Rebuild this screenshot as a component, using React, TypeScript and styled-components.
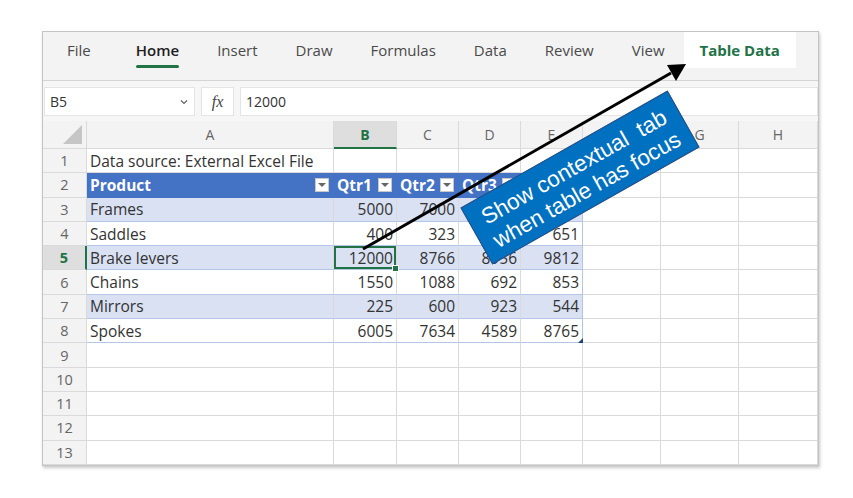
import styled, { createGlobalStyle, css } from 'styled-components';

const GREEN = '#217346';
const GRID = '#dadada';
const BAND = '#d9e1f2';
const TABLE_LINE = '#b4c6e7';
const COLS = '44px 247px 63px 62px 62px 62px 78px 78px 79px';

const GlobalStyle = createGlobalStyle`
  body {
    margin: 0;
    background: #fff;
    font-family: "Open Sans", "Noto Sans", sans-serif;
  }
`;

const Page = styled.div`
  padding: 31px 0 0 42px;
  height: 498px;
  box-sizing: border-box;
`;

const Window = styled.div`
  position: relative;
  width: 775px;
  border: 1px solid #c4c4c4;
  box-shadow: 1px 2px 3px rgba(0, 0, 0, 0.22);
  background: #fff;
  overflow: hidden;
`;

/* ribbon tabs */
const TabBar = styled.div`
  display: flex;
  height: 48px;
  padding-left: 5px;
  background: #f3f3f3;
  border-bottom: 1px solid #d4d4d4;
  box-shadow: 0 1px 2px rgba(0, 0, 0, 0.08);
`;

const Tab = styled.div<{ $active?: boolean; $contextual?: boolean }>`
  position: relative;
  height: 36px;
  display: flex;
  align-items: center;
  padding: 0 19px;
  font-size: 15px;
  color: #4a4a4a;
  white-space: nowrap;

  ${p => p.$active && css`
    margin-left: 7px;
    color: #1e1e1e;
    font-weight: 600;
    &::after {
      content: '';
      position: absolute;
      left: 19px;
      right: 19px;
      bottom: 0;
      height: 3px;
      border-radius: 2px;
      background: ${GREEN};
    }
  `}

  ${p => p.$contextual && css`
    background: #fff;
    color: ${GREEN};
    font-weight: 700;
    padding: 0 16px;
    margin-left: 0;
  `}
`;

/* formula bar */
const FormulaBar = styled.div`
  display: flex;
  gap: 6px;
  height: 40px;
  padding: 6px 0 5px 1px;
  box-sizing: border-box;
  background: #f6f6f6;
`;

const Field = styled.div<{ $w?: number }>`
  display: flex;
  align-items: center;
  background: #fff;
  border: 1px solid #e4e4e4;
  box-sizing: border-box;
  font-size: 14px;
  color: #333;
  padding: 0 5px;
  ${p => (p.$w ? css`width: ${p.$w}px;` : css`flex: 1;`)}
`;

const NameBox = styled(Field)`
  justify-content: space-between;
  padding-right: 6px;
`;

const Fx = styled(Field)`
  justify-content: center;
  font-family: "Liberation Serif", serif;
  font-style: italic;
  font-size: 16px;
  color: #444;
`;

/* sheet */
const Row = styled.div<{ $h?: number }>`
  display: grid;
  grid-template-columns: ${COLS};
  height: ${p => p.$h ?? 24.3}px;
`;

const Head = styled.div<{ $sel?: boolean; $corner?: boolean }>`
  position: relative;
  display: flex;
  align-items: center;
  justify-content: center;
  background: #f3f3f3;
  border-right: 1px solid ${GRID};
  border-bottom: 1px solid ${GRID};
  box-sizing: border-box;
  font-size: 14px;
  color: #666;

  ${p => p.$sel && css`
    background: #dedede;
    color: ${GREEN};
    font-weight: 700;
  `}

  ${p => p.$corner && css`
    &::after {
      content: '';
      position: absolute;
      right: 4px;
      bottom: 4px;
      border-left: 19px solid transparent;
      border-bottom: 19px solid #c6c6c6;
    }
  `}
`;

const ColHead = styled(Head)<{ $sel?: boolean }>`
  ${p => p.$sel && css`border-bottom: 2px solid ${GREEN};`}
`;

const RowHead = styled(Head)<{ $sel?: boolean }>`
  font-size: 14.5px;
  ${p => p.$sel && css`border-right: 2px solid ${GREEN};`}
`;

type Kind = 'plain' | 'band' | 'head' | 'empty';

const Cell = styled.div<{ $kind: Kind; $num?: boolean; $sel?: boolean; $end?: boolean; $last?: boolean }>`
  position: relative;
  display: flex;
  align-items: center;
  justify-content: ${p => (p.$num ? 'flex-end' : 'flex-start')};
  padding: 0 3px;
  box-sizing: border-box;
  font-size: 15.5px;
  color: #333;
  white-space: nowrap;
  border-right: 1px solid ${GRID};
  border-bottom: 1px solid ${GRID};

  ${p => p.$kind === 'band' && css`
    background: ${BAND};
    border-bottom-color: ${TABLE_LINE};
  `}
  ${p => p.$kind === 'plain' && css`
    border-bottom-color: ${TABLE_LINE};
  `}
  ${p => p.$kind === 'head' && css`
    background: #4472c4;
    color: #fff;
    font-weight: 700;
    justify-content: space-between;
    padding-right: 4px;
    border-right-color: #4472c4;
    border-bottom-color: #4472c4;
  `}
  ${p => p.$end && css`border-right-color: ${TABLE_LINE};`}

  ${p => p.$sel && css`
    box-shadow: inset 0 0 0 2px ${GREEN};
    &::after {
      content: '';
      position: absolute;
      right: -3px;
      bottom: -3px;
      width: 5px;
      height: 5px;
      background: ${GREEN};
      border: 1px solid #fff;
      z-index: 1;
    }
  `}

  ${p => p.$last && css`
    &::after {
      content: '';
      position: absolute;
      right: -1px;
      bottom: -1px;
      border-left: 5px solid transparent;
      border-bottom: 5px solid #1f3f7a;
    }
  `}
`;

const FilterBtn = styled.span`
  width: 14px;
  height: 14px;
  flex: none;
  background: #fff;
  border: 1px solid #c8c8c8;
  box-sizing: border-box;
  display: flex;
  align-items: center;
  justify-content: center;

  &::before {
    content: '';
    border-left: 4px solid transparent;
    border-right: 4px solid transparent;
    border-top: 4px solid #666;
  }
`;

/* annotation overlay */
const Arrow = styled.svg`
  position: absolute;
  left: 0;
  top: 0;
  pointer-events: none;
`;

const Callout = styled.div`
  position: absolute;
  left: 418px;
  top: 113px;
  width: 238px;
  height: 65px;
  box-sizing: border-box;
  transform: rotate(-29.5deg);
  background: #0070c0;
  border: 1px solid #2a4f86;
  color: #fff;
  font-family: "Liberation Sans", Arial, sans-serif;
  font-size: 22.5px;
  line-height: 26px;
  padding-top: 3px;
  text-align: center;
  display: flex;
  flex-direction: column;
  justify-content: center;
  white-space: pre;
`;

const tabs = ['File', 'Home', 'Insert', 'Draw', 'Formulas', 'Data', 'Review', 'View'];
const letters = ['A', 'B', 'C', 'D', 'E', 'F', 'G', 'H'];

const data: [string, number, number, number, number][] = [
  ['Frames', 5000, 7000, 3045, 7250],
  ['Saddles', 400, 323, 5673, 651],
  ['Brake levers', 12000, 8766, 8956, 9812],
  ['Chains', 1550, 1088, 692, 853],
  ['Mirrors', 225, 600, 923, 544],
  ['Spokes', 6005, 7634, 4589, 8765],
];

function EmptyTail({ from }: { from: number }) {
  return (
    <>
      {letters.slice(from).map(l => (
        <Cell key={l} $kind="empty" />
      ))}
    </>
  );
}

export default function App() {
  return (
    <Page>
      <GlobalStyle />
      <Window>
        <TabBar>
          {tabs.map(t => (
            <Tab key={t} $active={t === 'Home'}>{t}</Tab>
          ))}
          <Tab $contextual>Table Data</Tab>
        </TabBar>

        <FormulaBar>
          <NameBox $w={151}>
            <span>B5</span>
            <svg width="8" height="6" viewBox="0 0 8 6">
              <path d="M1 1.5 L4 4.5 L7 1.5" fill="none" stroke="#666" strokeWidth="1.2" />
            </svg>
          </NameBox>
          <Fx $w={33}>fx</Fx>
          <Field>12000</Field>
        </FormulaBar>

        <Row $h={28}>
          <Head $corner />
          {letters.map(l => (
            <ColHead key={l} $sel={l === 'B'}>{l}</ColHead>
          ))}
        </Row>

        <Row>
          <RowHead>1</RowHead>
          <Cell $kind="empty">Data source: External Excel File</Cell>
          <EmptyTail from={1} />
        </Row>

        <Row>
          <RowHead>2</RowHead>
          {['Product', 'Qtr1', 'Qtr2', 'Qtr3', 'Qtr4'].map(h => (
            <Cell key={h} $kind="head">
              <span>{h}</span>
              <FilterBtn />
            </Cell>
          ))}
          <EmptyTail from={5} />
        </Row>

        {data.map(([name, ...nums], i) => {
          const kind: Kind = i % 2 === 0 ? 'band' : 'plain';
          const rowNo = i + 3;
          return (
            <Row key={name}>
              <RowHead $sel={rowNo === 5}>{rowNo}</RowHead>
              <Cell $kind={kind}>{name}</Cell>
              {nums.map((n, j) => (
                <Cell
                  key={j}
                  $kind={kind}
                  $num
                  $sel={rowNo === 5 && j === 0}
                  $end={j === 3}
                  $last={rowNo === 8 && j === 3}
                >
                  {n}
                </Cell>
              ))}
              <EmptyTail from={5} />
            </Row>
          );
        })}

        {[9, 10, 11, 12, 13].map(n => (
          <Row key={n}>
            <RowHead>{n}</RowHead>
            <EmptyTail from={0} />
          </Row>
        ))}

        <Arrow width="775" height="434" viewBox="0 0 775 434">
          <line x1="320" y1="217" x2="628" y2="41" stroke="#000" strokeWidth="3" />
          <polygon points="643,32 624,33 633,49" fill="#000" />
        </Arrow>

        <Callout>{'Show contextual  tab\nwhen table has focus'}</Callout>
      </Window>
    </Page>
  );
}
